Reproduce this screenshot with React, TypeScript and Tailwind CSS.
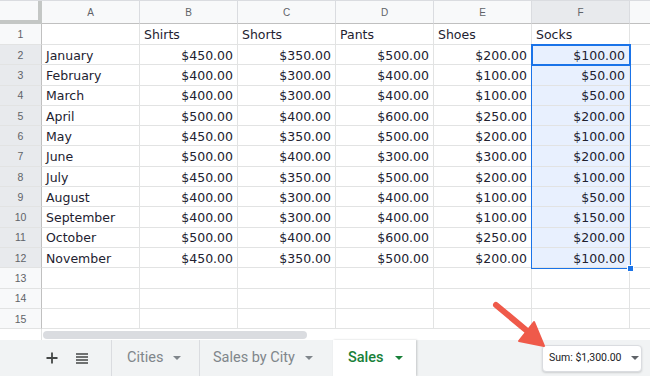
import React from "react";

const cols = ["A", "B", "C", "D", "E", "F"];

const header = ["", "Shirts", "Shorts", "Pants", "Shoes", "Socks"];

const data: [string, number[]][] = [
  ["January", [450, 350, 500, 200, 100]],
  ["February", [400, 300, 400, 100, 50]],
  ["March", [400, 300, 400, 100, 50]],
  ["April", [500, 400, 600, 250, 200]],
  ["May", [450, 350, 500, 200, 100]],
  ["June", [500, 400, 300, 300, 200]],
  ["July", [450, 350, 500, 200, 100]],
  ["August", [400, 300, 400, 100, 50]],
  ["September", [400, 300, 400, 100, 150]],
  ["October", [500, 400, 600, 250, 200]],
  ["November", [450, 350, 500, 200, 100]],
];

const money = (n: number) => "$" + n.toFixed(2);

function Caret({ className }: { className?: string }) {
  return (
    <svg width="8" height="4" viewBox="0 0 8 4" className={className}>
      <path d="M0 0 L8 0 L4 4 Z" fill="currentColor" />
    </svg>
  );
}

function Row({ num, cells, h, selected }: { num: number; cells: string[]; h: string; selected: boolean }) {
  return (
    <div className={`flex ${h}`}>
      <div
        className={`w-[42px] shrink-0 flex items-center justify-center pt-[2px] border-r border-r-[#c0c0c0] border-b border-b-[#e2e3e3] text-[10.5px] text-[#5f6368] ${
          selected ? "bg-[#e8eaed]" : "bg-[#f8f9fa]"
        }`}
      >
        {num}
      </div>
      {cells.map((c, i) => (
        <div
          key={i}
          className={`w-[98px] shrink-0 flex items-center border-r border-b border-[#e2e3e3] px-[4px] pt-[3px] font-['DejaVu_Sans',sans-serif] text-[12.5px] text-[#222230] whitespace-nowrap ${
            num > 1 && i > 0 ? "justify-end" : ""
          } ${selected && i === 5 ? "bg-[#e8f0fe]" : ""}`}
        >
          {c}
        </div>
      ))}
      <div className="flex-1 border-b border-[#e2e3e3]" />
    </div>
  );
}

export default function App() {
  const rows: string[][] = [header];
  data.forEach(([m, v]) => rows.push([m, ...v.map(money)]));
  while (rows.length < 15) rows.push(["", "", "", "", "", ""]);

  return (
    <div className="relative w-[650px] h-[376px] overflow-hidden bg-white font-['Liberation_Sans',Arial,sans-serif] flex flex-col">
      {/* column headers */}
      <div className="flex h-[24px] shrink-0 border-t border-[#dadce0] bg-[#f8f9fa]">
        <div className="w-[42px] shrink-0 border-r-4 border-b-4 border-[#c4c7c5] bg-[#f8f9fa]" />
        {cols.map((c) => (
          <div
            key={c}
            className={`w-[98px] shrink-0 flex items-center justify-center border-r border-b border-r-[#dadce0] border-b-[#c0c0c0] text-[10px] text-[#5f6368] ${
              c === "F" ? "bg-[#e8eaed]" : ""
            }`}
          >
            {c}
          </div>
        ))}
        <div className="flex-1 border-b border-[#c0c0c0]" />
      </div>

      {/* rows */}
      <div className="flex flex-col shrink-0">
        {rows.map((r, i) => (
          <Row key={i} num={i + 1} cells={r} h={i === 0 ? "h-[21px]" : "h-[20.3px]"} selected={i >= 1 && i <= 11} />
        ))}
      </div>

      {/* horizontal scrollbar */}
      <div className="flex h-[11px] shrink-0 items-center">
        <div className="w-[42px] h-full shrink-0 border-r border-[#e2e3e3]" />
        <div className="ml-[1px] w-[264px] h-[8px] rounded-full bg-[#dadce0]" />
      </div>

      {/* sheet tabs */}
      <div className="flex flex-1 bg-[#f1f3f4] font-['Roboto',sans-serif] text-[14.5px]">
        <div className="w-[112px] shrink-0 flex items-center border-r border-[#dadce0]">
          <svg width="12" height="12" viewBox="0 0 12 12" className="ml-[46px] text-[#444746]">
            <path d="M6 0.5 V11.5 M0.5 6 H11.5" stroke="currentColor" strokeWidth="1.8" />
          </svg>
          <svg width="12" height="11" viewBox="0 0 12 11" className="ml-[18px] text-[#444746]">
            <path d="M0 1 H12 M0 4 H12 M0 7 H12 M0 10 H12" stroke="currentColor" strokeWidth="1.6" />
          </svg>
        </div>
        <div className="w-[88px] shrink-0 flex items-center border-r border-[#dadce0] pl-[15px] text-[#80868b]">
          Cities
          <Caret className="ml-[10px] text-[#80868b]" />
        </div>
        <div className="w-[133px] shrink-0 flex items-center pl-[13px] text-[#80868b]">
          Sales by City
          <Caret className="ml-[10px] text-[#80868b]" />
        </div>
        <div className="w-[83px] shrink-0 flex items-center bg-white pl-[15px] font-medium text-[#188038] shadow-[1px_0_2px_rgba(60,64,67,0.25)]">
          Sales
          <Caret className="ml-[11px] text-[#188038]" />
        </div>
        <div className="flex-1 flex items-center justify-end pr-[8px]">
          <div className="flex items-center h-[27px] w-[100px] rounded-[4px] border border-[#dadce0] bg-white pl-[6px] text-[10.5px] text-[#202124] whitespace-nowrap shadow-[0_1px_2px_rgba(60,64,67,0.2)]">
            Sum: $1,300.00
            <Caret className="ml-[9px] text-[#5f6368]" />
          </div>
        </div>
      </div>

      {/* selection overlay */}
      <div className="absolute left-[531px] top-[44px] w-[100px] h-[225px] border border-[#1a73e8] pointer-events-none" />
      <div className="absolute left-[531px] top-[44px] w-[100px] h-[22px] border-2 border-[#1a73e8] pointer-events-none" />
      <div className="absolute left-[627px] top-[265px] w-[7px] h-[7px] bg-[#1a73e8] border border-white pointer-events-none" />

      {/* annotation arrow */}
      <svg className="absolute left-0 top-0 pointer-events-none" width="650" height="376" viewBox="0 0 650 376">
        <path d="M496 305 L532 335" stroke="#ef5a4a" strokeWidth="6" strokeLinecap="round" />
        <path d="M544 346 L519 341 L534 322 Z" fill="#ef5a4a" stroke="#ef5a4a" strokeWidth="2" strokeLinejoin="round" />
      </svg>
    </div>
  );
}
